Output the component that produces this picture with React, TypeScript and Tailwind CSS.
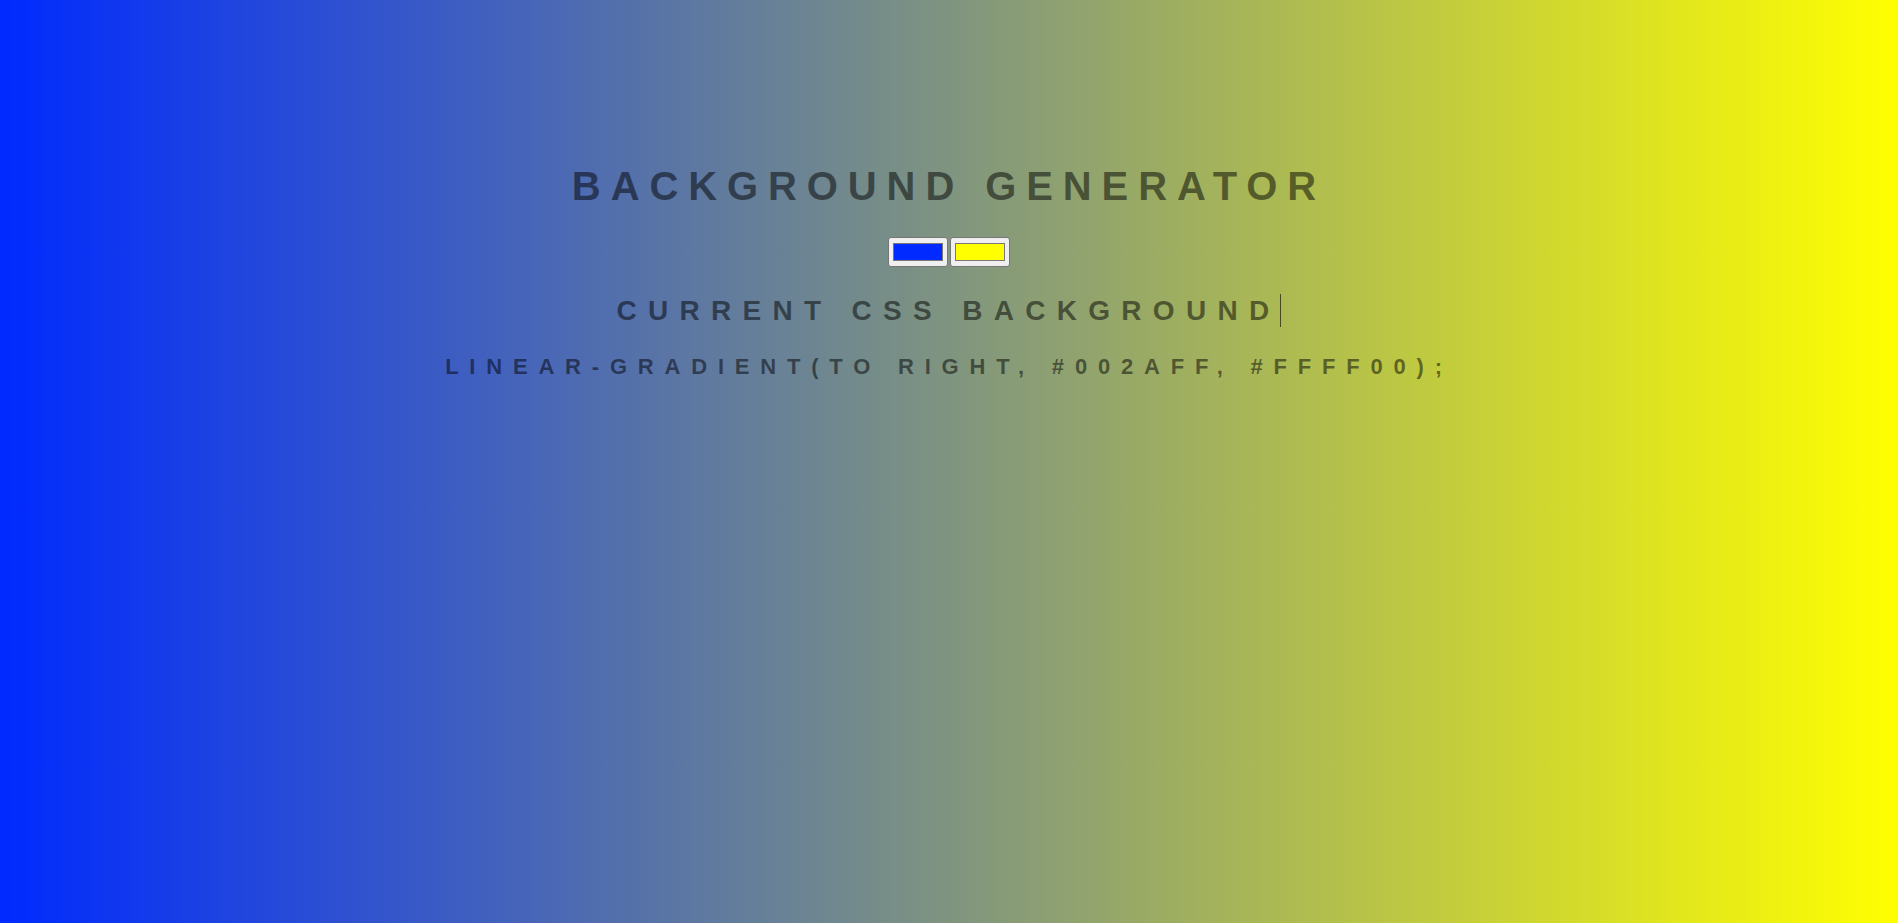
import { useState } from "react";

function Swatch({ color }: { color: string }) {
  return (
    <div className="flex h-[30px] w-[60px] items-center justify-center rounded-[3px] border border-[#767676] bg-[#efefef]">
      <div className="h-[18px] w-[50px] border border-[#777777]" style={{ backgroundColor: color }} />
    </div>
  );
}

export default function App() {
  const [colors] = useState({ from: "#002aff", to: "#ffff00" });
  const css = `linear-gradient(to right, ${colors.from}, ${colors.to});`;

  return (
    <div className="flex h-[923px] w-full flex-col items-center overflow-hidden bg-[linear-gradient(to_right,#002aff,#ffff00)] pt-[163px] text-center font-['Liberation_Sans',Arial,sans-serif] font-bold uppercase text-black/50">
      <h1 className="whitespace-nowrap text-[40px] leading-[46px] tracking-[9.9px]">Background Generator</h1>

      <div className="mt-[28px] flex gap-[2px]">
        <Swatch color={colors.from} />
        <Swatch color={colors.to} />
      </div>

      <h3 className="mt-[27px] flex items-center whitespace-nowrap text-[28px] leading-[33px] tracking-[11.3px]">
        <span>Current CSS Background</span>
        <span className="h-[33px] w-px bg-black/60" />
      </h3>

      <h3 className="mt-[27px] whitespace-nowrap text-[22px] leading-[26px] tracking-[10.8px]">{css}</h3>
    </div>
  );
}
